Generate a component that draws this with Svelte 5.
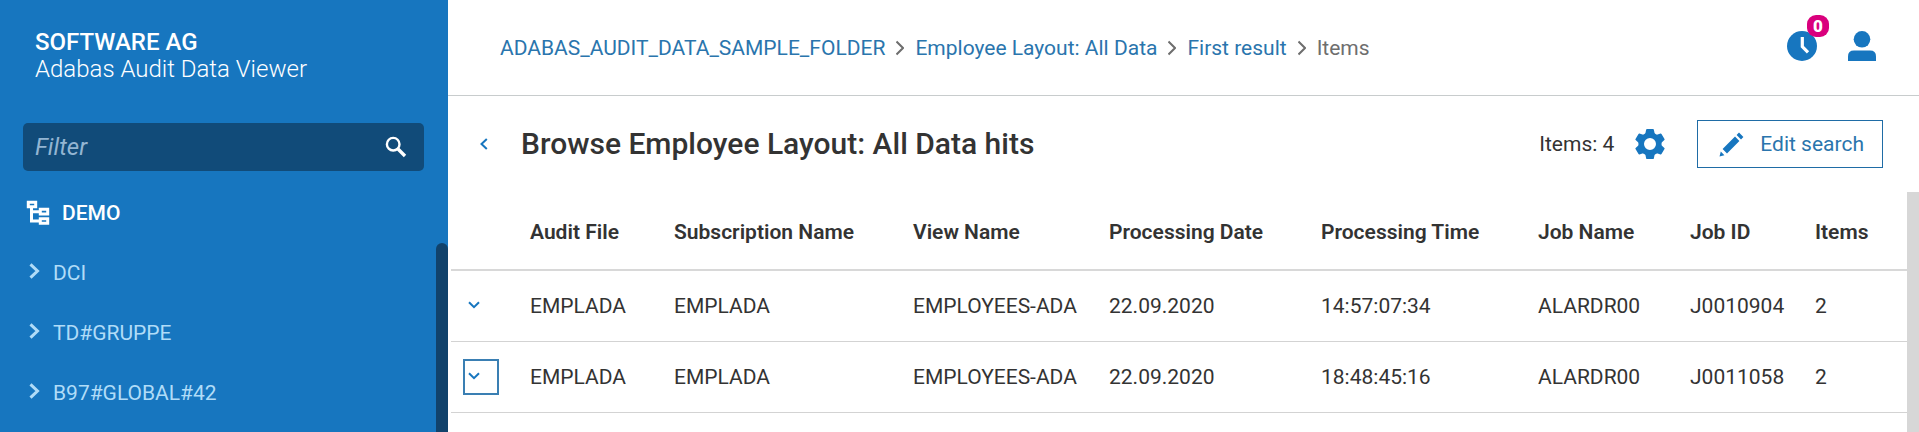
<script>
  let filter = '';
  let focusedRow = 1;

  const folders = ['DCI', 'TD#GRUPPE', 'B97#GLOBAL#42'];
  const crumbs = ['ADABAS_AUDIT_DATA_SAMPLE_FOLDER', 'Employee Layout: All Data', 'First result'];

  const columns = [
    { key: 'file', label: 'Audit File', width: 144 },
    { key: 'subscription', label: 'Subscription Name', width: 239 },
    { key: 'view', label: 'View Name', width: 196 },
    { key: 'date', label: 'Processing Date', width: 212 },
    { key: 'time', label: 'Processing Time', width: 217 },
    { key: 'job', label: 'Job Name', width: 152 },
    { key: 'jobId', label: 'Job ID', width: 125 },
    { key: 'items', label: 'Items', width: 108 }
  ];

  const rows = [
    { file: 'EMPLADA', subscription: 'EMPLADA', view: 'EMPLOYEES-ADA', date: '22.09.2020', time: '14:57:07:34', job: 'ALARDR00', jobId: 'J0010904', items: 2 },
    { file: 'EMPLADA', subscription: 'EMPLADA', view: 'EMPLOYEES-ADA', date: '22.09.2020', time: '18:48:45:16', job: 'ALARDR00', jobId: 'J0011058', items: 2 }
  ];
</script>

<div class="app">
  <aside class="sidebar">
    <div class="brand">
      <strong>SOFTWARE AG</strong>
      <span>Adabas Audit Data Viewer</span>
    </div>

    <div class="filter">
      <input type="text" placeholder="Filter" aria-label="Filter" bind:value={filter} />
      <button aria-label="Search">
        <svg width="22" height="22" viewBox="0 0 22 22" fill="none" stroke="currentColor">
          <circle cx="8.2" cy="8.2" r="6.3" stroke-width="2.4" />
          <path d="M13 13 L20 20" stroke-width="3.4" />
        </svg>
      </button>
    </div>

    <a class="root" href="#demo">
      <svg width="24" height="26" viewBox="0 0 24 26" fill="none" stroke="currentColor" stroke-width="3">
        <path d="M2.3 2.3 H9.7 V6.7 H2.3 Z M14.3 9.3 H21.7 V14 H14.3 Z M14.3 18.8 H21.7 V23.2 H14.3 Z" />
        <path d="M5.5 7 V21 H14 M5.5 11.7 H14" />
      </svg>
      DEMO
    </a>

    <div class="tree">
      <nav>
        {#each folders as folder}
          <a href="#{folder}">
            <svg width="11" height="16" viewBox="0 0 11 16" fill="none" stroke="currentColor" stroke-width="3">
              <path d="M1.5 1.3 L8.5 8 L1.5 14.7" />
            </svg>
            {folder}
          </a>
        {/each}
      </nav>
      <div class="thumb"></div>
    </div>
  </aside>

  <main>
    <header>
      <nav class="crumbs" aria-label="Breadcrumb">
        {#each crumbs as crumb}
          <a href="#{crumb}">{crumb}</a>
          <svg width="8" height="16" viewBox="0 0 8 16" fill="none" stroke="currentColor" stroke-width="2">
            <path d="M0.5 1.5 L7 8 L0.5 14.5" />
          </svg>
        {/each}
        <span>Items</span>
      </nav>
      <div class="actions">
        <button class="clock" aria-label="Jobs">
          <svg width="30" height="30" viewBox="0 0 30 30">
            <circle cx="15" cy="15" r="15" fill="currentColor" />
            <path d="M15.3 6 V15.6 L21 21.4" fill="none" stroke="#fff" stroke-width="3.2" />
          </svg>
          <span class="badge">0</span>
        </button>
        <button aria-label="User">
          <svg width="28" height="30" viewBox="0 0 28 30" fill="currentColor">
            <circle cx="14" cy="8.3" r="8.3" />
            <path d="M0 30 V25.5 Q0 19.6 6 19.6 H22 Q28 19.6 28 25.5 V30 Z" />
          </svg>
        </button>
      </div>
    </header>

    <section class="toolbar">
      <button class="back" aria-label="Back">
        <svg width="8" height="12" viewBox="0 0 8 12" fill="none" stroke="currentColor" stroke-width="2">
          <path d="M6.8 1 L1.5 6 L6.8 11" />
        </svg>
      </button>
      <h1>Browse Employee Layout: All Data hits</h1>
      <span class="count">Items: 4</span>
      <button class="gear" aria-label="Settings">
        <svg width="30" height="30" viewBox="0 0 30 30">
          <circle cx="15" cy="15" r="8.8" fill="none" stroke="currentColor" stroke-width="5.6" />
          <g fill="currentColor">
            {#each [0, 60, 120, 180, 240, 300] as angle}
              <path d="M11.2 0.6 Q11.3 0 12 0 H18 Q18.7 0 18.8 0.6 L20 6 H10 Z" transform="rotate({angle} 15 15)" />
            {/each}
          </g>
        </svg>
      </button>
      <button class="edit">
        <svg width="25" height="25" viewBox="0 0 25 25" fill="currentColor">
          <path d="M0.5 24.5 L1.8 19.6 L5.4 23.2 Z M3.6 17 L16 4.6 L20.4 9 L8 21.4 Z M17.6 3 L20 0.6 L24.4 5 L22 7.4 Z" />
        </svg>
        Edit search
      </button>
    </section>

    <div class="results">
      <table>
        <colgroup>
          <col class="toggle-col" />
          {#each columns as column}
            <col style="width: {column.width}px" />
          {/each}
        </colgroup>
        <thead>
          <tr>
            <td></td>
            {#each columns as column}
              <th scope="col">{column.label}</th>
            {/each}
          </tr>
        </thead>
        <tbody>
          {#each rows as row, i}
            <tr>
              <td class="toggle-cell">
                <button
                  class="toggle"
                  class:focused={i === focusedRow}
                  aria-label="Expand row"
                  on:click={() => (focusedRow = i)}
                >
                  <svg width="12" height="8" viewBox="0 0 12 8" fill="none" stroke="currentColor" stroke-width="2">
                    <path d="M1 1.2 L6 6.2 L11 1.2" />
                  </svg>
                </button>
              </td>
              {#each columns as column}
                <td>{row[column.key]}</td>
              {/each}
            </tr>
          {/each}
        </tbody>
      </table>
      <div class="track"></div>
    </div>
  </main>
</div>

<style>
  :global(body) {
    margin: 0;
    background: #fff;
  }
  .app {
    display: flex;
    min-height: 100vh;
    font-family: Roboto, "Liberation Sans", sans-serif;
    font-size: 21px;
    line-height: 24px;
    color: #333;
  }
  a { color: inherit; text-decoration: none; }
  svg { display: block; flex: none; }
  button {
    display: flex;
    align-items: center;
    padding: 0;
    border: none;
    background: none;
    color: #1776bf;
    font: inherit;
    cursor: pointer;
  }

  .sidebar {
    display: flex;
    flex-direction: column;
    flex: none;
    width: 448px;
    background: #1776bf;
    color: #fff;
  }
  .brand {
    display: flex;
    flex-direction: column;
    padding: 29px 35px 0;
    font-size: 24px;
    line-height: 27px;
    font-weight: 300;
  }
  .brand strong { font-weight: 500; }
  .filter {
    display: flex;
    align-items: center;
    height: 48px;
    margin: 40px 24px 0 23px;
    padding: 0 17px 0 12px;
    border-radius: 5px;
    background: #114b79;
  }
  .filter input {
    flex: 1;
    min-width: 0;
    padding: 0;
    border: none;
    outline: none;
    background: none;
    color: #fff;
    font: inherit;
    font-size: 24px;
  }
  .filter input::placeholder {
    color: #93b5d2;
    font-style: italic;
    opacity: 1;
  }
  .filter button { color: #fff; }
  .root {
    display: flex;
    align-items: center;
    gap: 12px;
    height: 60px;
    margin-top: 12px;
    padding-left: 26px;
    font-weight: 500;
  }
  .tree {
    display: flex;
    flex: 1;
  }
  .tree nav { flex: 1; }
  .tree a {
    display: flex;
    align-items: center;
    gap: 13px;
    height: 60px;
    padding-left: 29px;
    color: #b0dcf8;
  }
  .tree svg { margin-bottom: 4px; }
  .thumb {
    width: 12px;
    border-radius: 6px 6px 0 0;
    background: #11426b;
  }

  main {
    display: flex;
    flex-direction: column;
    flex: 1;
    min-width: 0;
  }
  header {
    display: flex;
    align-items: center;
    justify-content: space-between;
    height: 95px;
    padding: 0 43px 0 52px;
    border-bottom: 1px solid #c8cccd;
  }
  .crumbs {
    display: flex;
    align-items: center;
    gap: 11px;
    color: #6e6e6e;
  }
  .crumbs a { color: #2a75ad; }
  .actions {
    display: flex;
    gap: 31px;
    padding-bottom: 3px;
  }
  .clock { position: relative; }
  .badge {
    position: absolute;
    top: -16px;
    right: -12px;
    min-width: 22px;
    border-radius: 9px;
    background: #d9007d;
    color: #fff;
    font-size: 17px;
    line-height: 22px;
    font-weight: 900;
    text-align: center;
  }

  .toolbar {
    display: flex;
    align-items: center;
    height: 96px;
    padding: 0 36px 0 32px;
  }
  h1 {
    flex: 1;
    margin: 0 0 0 33px;
    font-size: 30px;
    line-height: 36px;
    font-weight: 500;
  }
  .gear { margin: 0 32px 0 21px; }
  .edit {
    gap: 16px;
    height: 48px;
    padding: 0 18px 0 21px;
    border: 1px solid #1f6ca6;
    color: #2a75ad;
  }
  .edit svg { color: #1776bf; }

  .results {
    display: flex;
    flex: 1;
    align-items: stretch;
    padding-left: 3px;
  }
  table {
    flex: 1;
    align-self: flex-start;
    min-width: 0;
    width: 100%;
    table-layout: fixed;
    border-collapse: separate;
    border-spacing: 0;
  }
  .toggle-col { width: 63px; }
  th, td {
    height: 70px;
    padding: 0 0 0 16px;
    border-bottom: 1px solid #d3d3d3;
    text-align: left;
    white-space: nowrap;
  }
  thead th, thead td {
    height: 75px;
    padding-top: 2px;
    border-bottom: 2px solid #d8d8d8;
    font-weight: 600;
  }
  .toggle-cell { padding-left: 12px; }
  .toggle {
    width: 36px;
    height: 36px;
    padding: 0 0 0 3px;
    border: 2px solid transparent;
    box-sizing: border-box;
  }
  .toggle svg { margin-bottom: 2px; }
  .toggle.focused { border-color: #3a7fb3; }
  .track {
    flex: none;
    width: 12px;
    background: #d7d7d7;
  }
</style>
